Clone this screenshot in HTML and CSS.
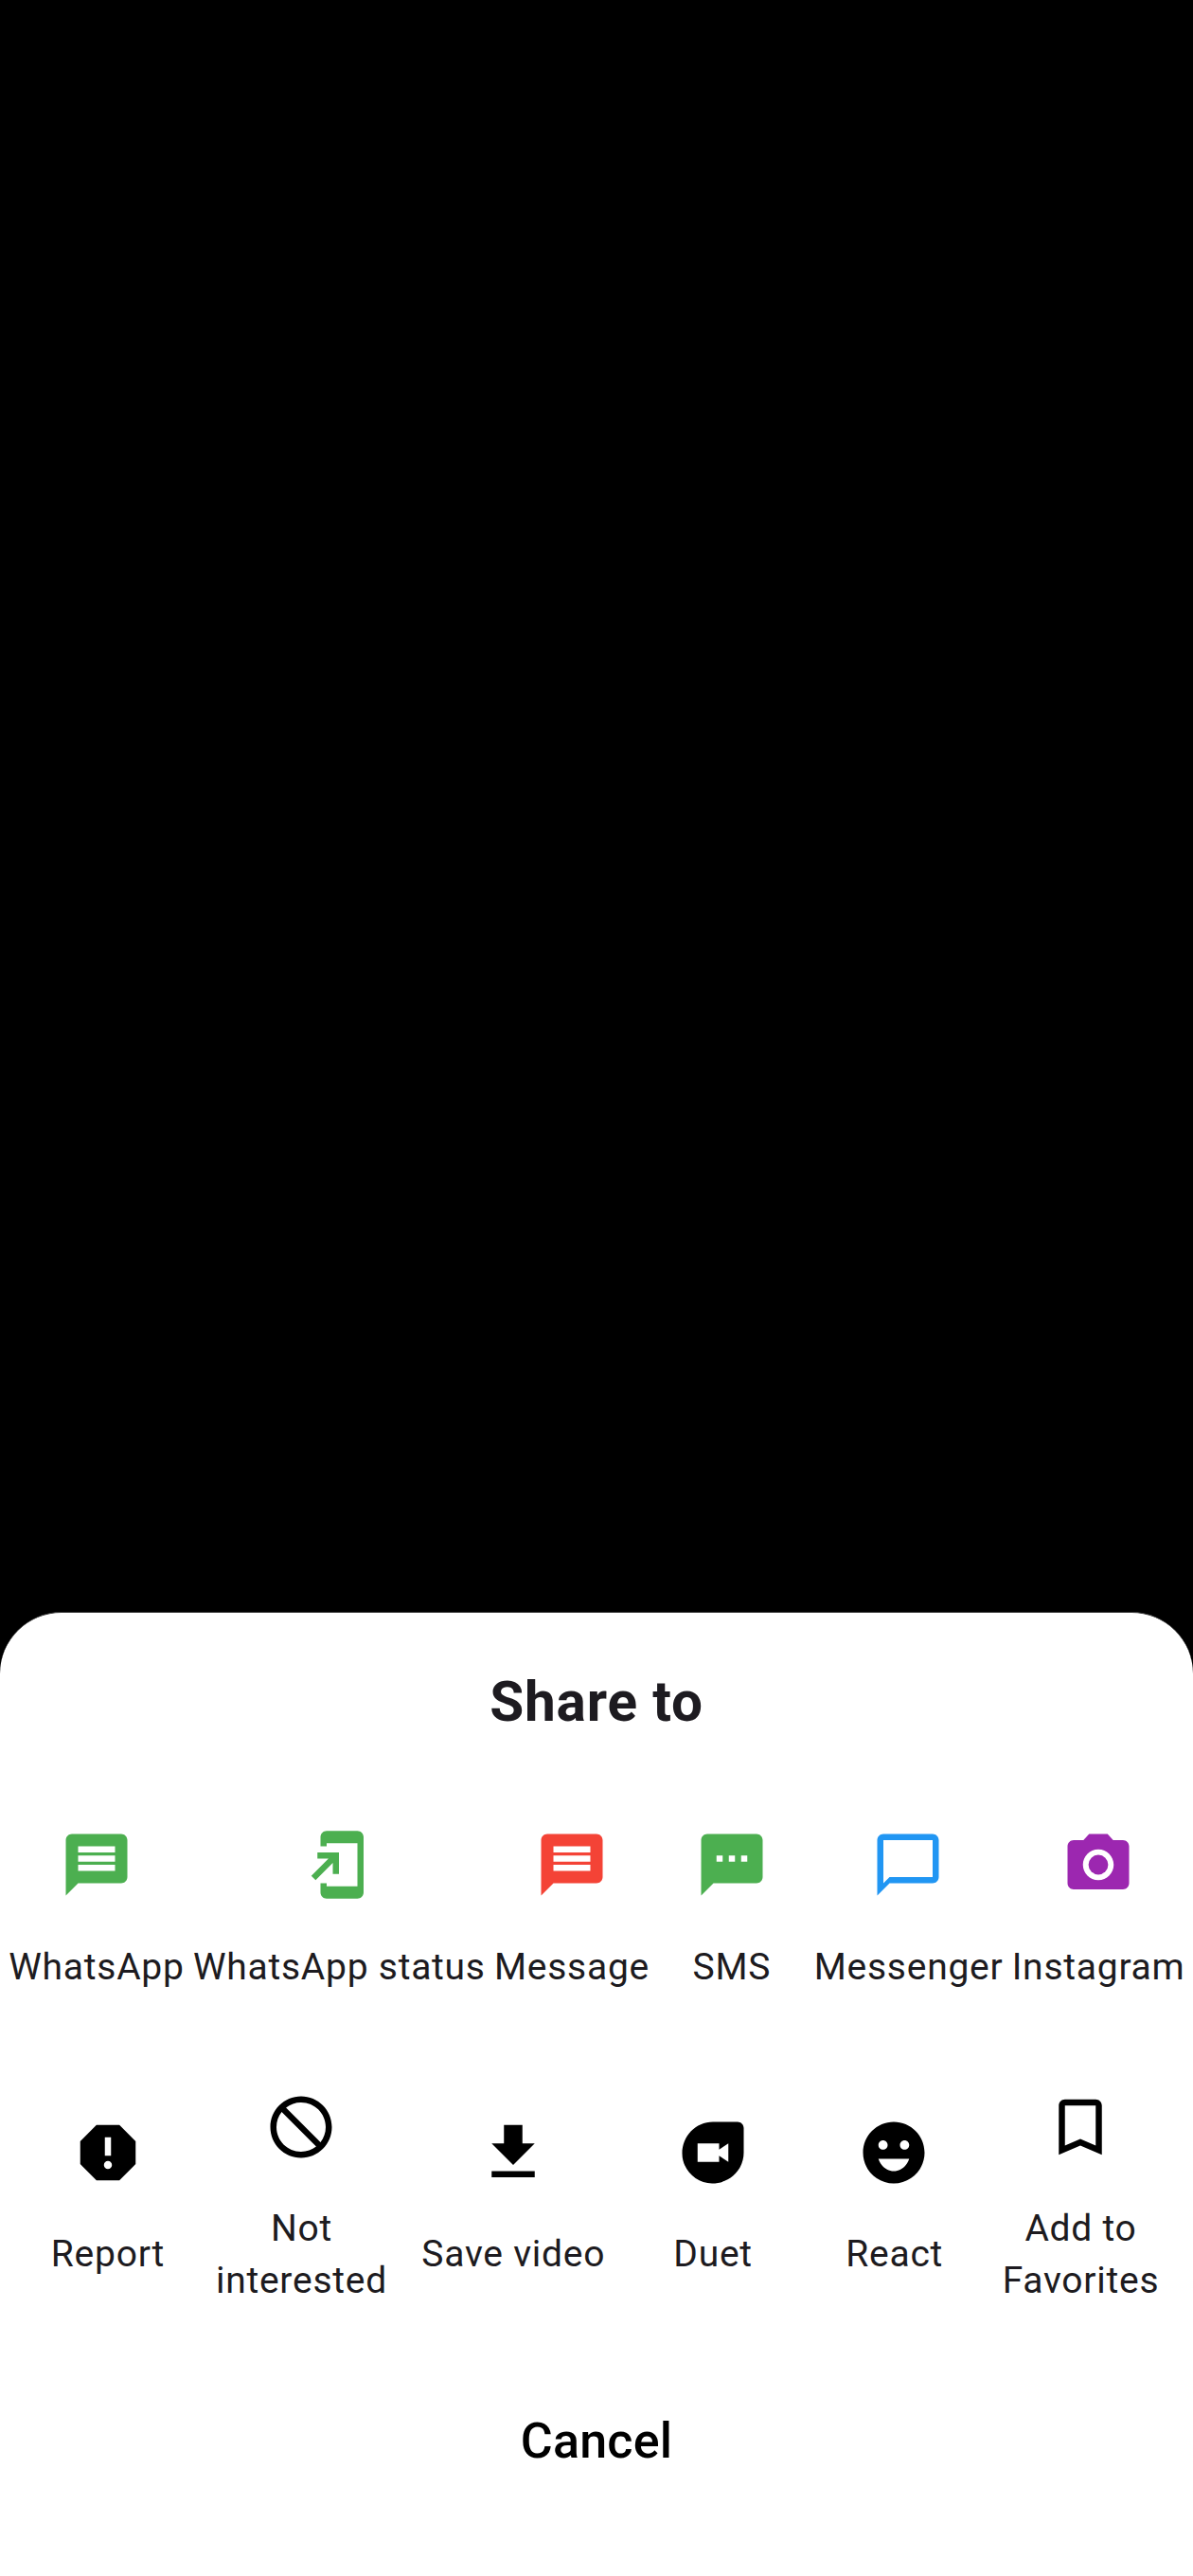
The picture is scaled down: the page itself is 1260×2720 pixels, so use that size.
FILE: index.html
```html
<!DOCTYPE html>
<html lang="en">
<head>
<meta charset="utf-8">
<title>Share to</title>
<link rel="stylesheet" href="styles.css">
</head>
<body>
<main class="sheet">
  <h1 class="title">Share to</h1>
  <section class="row">
    <div class="item green"><svg class="icon" viewBox="0 0 24 24"><path d="M20 2H4c-1.1 0-1.99.9-1.99 2L2 22l4-4h14c1.1 0 2-.9 2-2V4c0-1.1-.9-2-2-2zm-2 12H6v-2h12v2zm0-3H6V9h12v2zm0-3H6V6h12v2z"/></svg><span class="label">WhatsApp</span></div>
    <div class="item green"><svg class="icon" viewBox="0 0 24 24"><path d="M18 1.01L8 1c-1.1 0-2 .9-2 2v3h2V5h10v14H8v-1H6v3c0 1.1.9 2 2 2h10c1.1 0 2-.9 2-2V3c0-1.1-.9-1.99-2-1.99zM10 15h2V8H5v2h3.59L3 15.59 4.41 17 10 11.41V15z"/></svg><span class="label">WhatsApp status</span></div>
    <div class="item red"><svg class="icon" viewBox="0 0 24 24"><path d="M20 2H4c-1.1 0-1.99.9-1.99 2L2 22l4-4h14c1.1 0 2-.9 2-2V4c0-1.1-.9-2-2-2zm-2 12H6v-2h12v2zm0-3H6V9h12v2zm0-3H6V6h12v2z"/></svg><span class="label">Message</span></div>
    <div class="item green"><svg class="icon" viewBox="0 0 24 24"><path d="M20 2H4c-1.1 0-1.99.9-1.99 2L2 22l4-4h14c1.1 0 2-.9 2-2V4c0-1.1-.9-2-2-2zM9 11H7V9h2v2zm4 0h-2V9h2v2zm4 0h-2V9h2v2z"/></svg><span class="label">SMS</span></div>
    <div class="item blue"><svg class="icon" viewBox="0 0 24 24"><path d="M20 2H4c-1.1 0-2 .9-2 2v18l4-4h14c1.1 0 2-.9 2-2V4c0-1.1-.9-2-2-2zm0 14H6l-2 2V4h16v12z"/></svg><span class="label">Messenger</span></div>
    <div class="item purple"><svg class="icon" viewBox="0 0 24 24"><circle cx="12" cy="12" r="3.2"/><path d="M9 2L7.17 4H4c-1.1 0-2 .9-2 2v12c0 1.1.9 2 2 2h16c1.1 0 2-.9 2-2V6c0-1.1-.9-2-2-2h-3.17L15 2H9zm3 15c-2.76 0-5-2.24-5-5s2.24-5 5-5 5 2.24 5 5-2.24 5-5 5z"/></svg><span class="label">Instagram</span></div>
  </section>
  <section class="row actions">
    <div class="item"><svg class="icon" viewBox="0 0 24 24"><path d="M15.73 3H8.27L3 8.27v7.46L8.27 21h7.46L21 15.73V8.27L15.73 3zM12 17.3c-.72 0-1.3-.58-1.3-1.3s.58-1.3 1.3-1.3 1.3.58 1.3 1.3-.58 1.3-1.3 1.3zm1-4.3h-2V7h2v6z"/></svg><span class="label">Report</span></div>
    <div class="item"><svg class="icon" viewBox="0 0 24 24"><path d="M12 2C6.48 2 2 6.48 2 12s4.48 10 10 10 10-4.48 10-10S17.52 2 12 2zm0 18c-4.42 0-8-3.58-8-8 0-1.85.63-3.55 1.69-4.9L16.9 18.31C15.55 19.37 13.85 20 12 20zm6.31-3.1L7.1 5.69C8.45 4.63 10.15 4 12 4c4.42 0 8 3.58 8 8 0 1.85-.63 3.55-1.69 4.9z"/></svg><span class="label">Not<br>interested</span></div>
    <div class="item"><svg class="icon" viewBox="0 0 24 24"><path d="M19 9h-4V3H9v6H5l7 7 7-7zM5 18v2h14v-2H5z"/></svg><span class="label">Save video</span></div>
    <div class="item"><svg class="icon" viewBox="0 0 24 24"><path d="M12 2C6.38 2 2 6.66 2 12.28 2 17.5 6.49 22 11.72 22 17.39 22 22 17.62 22 12V4c0-1.1-.9-2-2-2h-8zm5 13l-3-2v2H7V9h7v2l3-2v6z"/></svg><span class="label">Duet</span></div>
    <div class="item"><svg class="icon" viewBox="0 0 24 24"><path d="M11.99 2C6.47 2 2 6.48 2 12s4.47 10 9.99 10C17.52 22 22 17.52 22 12S17.52 2 11.99 2zM8.5 8c.83 0 1.5.67 1.5 1.5S9.33 11 8.5 11 7 10.33 7 9.5 7.67 8 8.5 8zM12 18c-2.28 0-4.22-1.66-5-4h10c-.78 2.34-2.72 4-5 4zm3.5-7c-.83 0-1.5-.67-1.5-1.5S14.67 8 15.5 8s1.5.67 1.5 1.5-.67 1.5-1.5 1.5z"/></svg><span class="label">React</span></div>
    <div class="item"><svg class="icon" viewBox="0 0 24 24"><path d="M17 3H7c-1.1 0-1.99.9-1.99 2L5 21l7-3 7 3V5c0-1.1-.9-2-2-2zm0 15l-5-2.18L7 18V5h10v13z"/></svg><span class="label">Add to<br>Favorites</span></div>
  </section>
  <button class="cancel">Cancel</button>
</main>
</body>
</html>
```
FILE: styles.css
```css
* { box-sizing: border-box; }
html, body { margin: 0; height: 2720px; }
body {
  display: flex;
  flex-direction: column;
  justify-content: flex-end;
  background: #000;
  color: #1d1b20;
  font-family: Roboto, sans-serif;
}
.sheet {
  display: flex;
  flex-direction: column;
  height: 1018px;
  padding-top: 52px;
  border-top: 1px solid #444;
  border-radius: 65px 65px 0 0;
  background: #fff;
}
.title {
  margin: 0;
  font-size: 58.5px;
  font-weight: 700;
  line-height: 84px;
  letter-spacing: 0.8125px;
  text-align: center;
}
.row {
  display: flex;
  justify-content: space-evenly;
  align-items: center;
  margin-top: 52px;
}
.actions {
  margin-top: 63px;
  color: #000;
}
.item {
  display: flex;
  flex-direction: column;
  align-items: center;
  min-width: 156px;
}
.icon {
  width: 78px;
  height: 78px;
  margin: 39px;
  fill: currentColor;
}
.label {
  padding: 3px 0 0 0.75px;
  color: #1d1b20;
  font-size: 39px;
  line-height: 55px;
  letter-spacing: 0.75px;
  text-align: center;
  white-space: nowrap;
}
.actions .label {
  min-height: 58px;
  padding-top: 2px;
}
.green { color: #4caf50; }
.red { color: #f44336; }
.blue { color: #2196f3; }
.purple { color: #9c27b0; }
.cancel {
  margin-top: 105px;
  padding: 0;
  border: 0;
  background: none;
  color: #000;
  font: 500 52px/74px Roboto, sans-serif;
  letter-spacing: 0.2px;
}
```
